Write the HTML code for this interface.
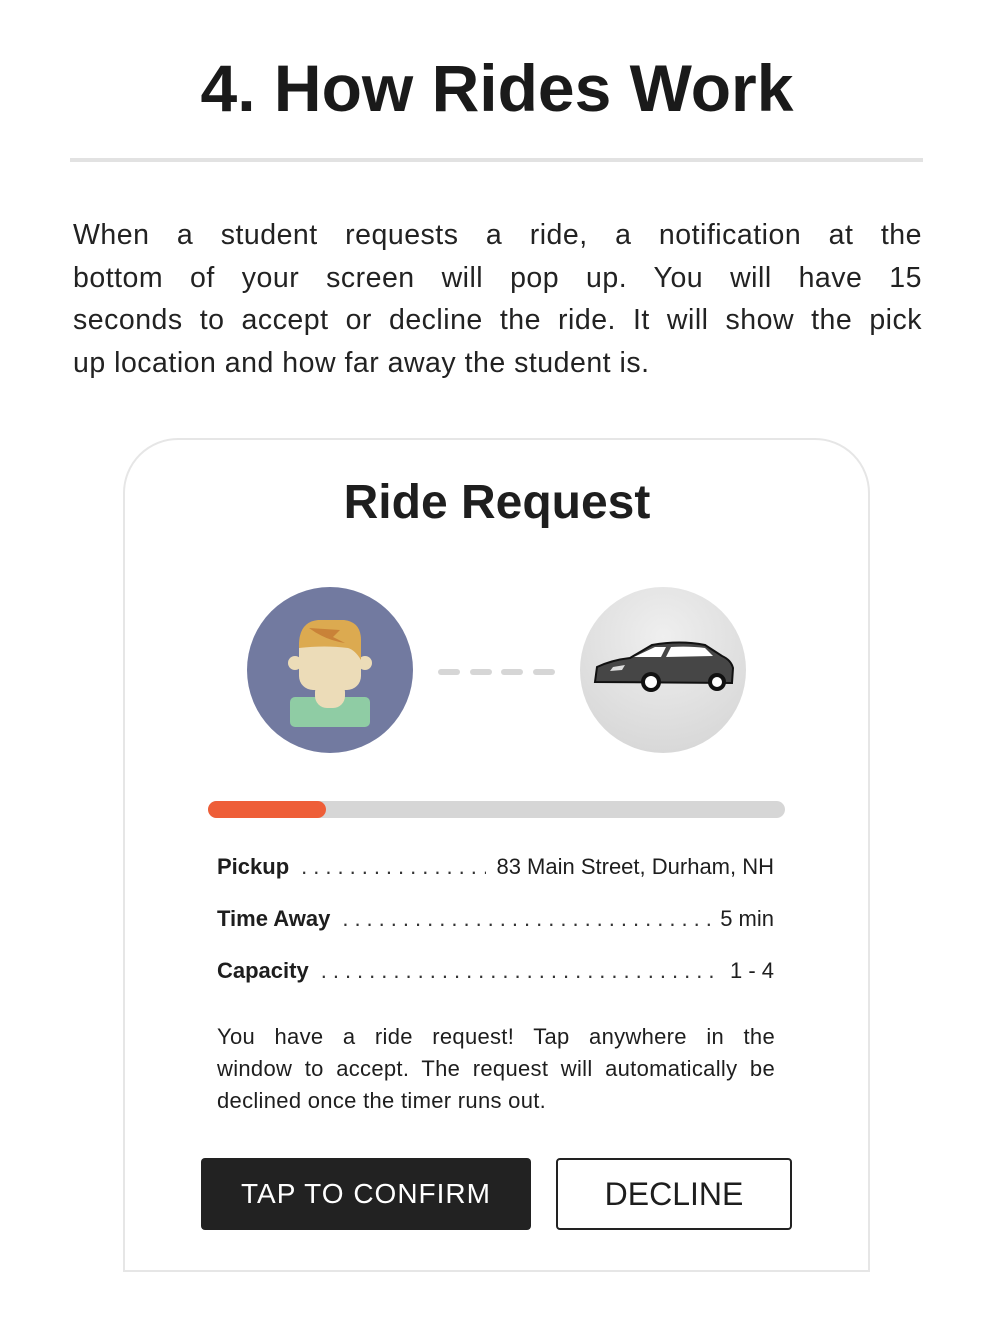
<!DOCTYPE html>
<html><head><meta charset="utf-8"><style>
*{margin:0;padding:0;box-sizing:border-box}
body{width:994px;height:1332px;background:#fff;position:relative;font-family:"Liberation Sans",sans-serif;color:#1e1e1e;overflow:hidden}
.a{position:absolute}
h1{position:absolute;left:0;width:994px;top:48px;text-align:center;font-size:66px;font-weight:bold;line-height:80px;color:#1a1a1a}
.rule{left:70px;top:158px;width:853px;height:4px;background:#e2e2e2}
.intro{left:73px;top:214px;width:849px;font-size:28.5px;line-height:42.5px;color:#222;letter-spacing:0.5px}
.j{text-align:justify;text-align-last:justify;white-space:nowrap}
.card{left:123px;top:438px;width:747px;height:834px;border:2px solid #e6e6e6;border-radius:55px 55px 0 0}
.rt{left:0;width:994px;top:473px;text-align:center;font-size:48px;font-weight:bold;line-height:60px}
.row{left:217px;width:557px;font-size:22px;line-height:28px;display:flex;white-space:nowrap}
.row b{margin-right:12px}
.row .d{flex:1;overflow:hidden;letter-spacing:6px;color:#333}
.row .v{margin-left:10px}
.p{left:217px;top:1021px;width:558px;font-size:22px;line-height:32px;letter-spacing:0.3px}
.b1{left:201px;top:1158px;width:330px;height:72px;background:#222;border-radius:4px;color:#fff;font-size:28px;text-align:center;line-height:72px;letter-spacing:1px}
.b2{left:556px;top:1158px;width:236px;height:72px;border:2px solid #222;border-radius:4px;font-size:32px;text-align:center;line-height:68px}
</style></head><body>
<h1>4. How Rides Work</h1>
<div class="a rule"></div>
<div class="a intro"><div class="j">When a student requests a ride, a notification at the</div><div class="j">bottom of your screen will pop up. You will have 15</div><div class="j">seconds to accept or decline the ride. It will show the pick</div><div>up location and how far away the student is.</div></div>
<div class="a card"></div>
<div class="a rt">Ride Request</div>
<svg class="a" style="left:0;top:0" width="994" height="840" viewBox="0 0 994 840">
<defs><radialGradient id="g" cx="0.5" cy="0.3" r="0.7"><stop offset="0" stop-color="#efefef"/><stop offset="1" stop-color="#d8d8d8"/></radialGradient></defs>
<circle cx="330" cy="670" r="83" fill="#727aa0"/>
<rect x="290" y="697" width="80" height="30" rx="5" fill="#8fcca4"/>
<rect x="315" y="680" width="30" height="28" rx="12" fill="#ecdcb8"/>
<circle cx="295" cy="663" r="7" fill="#ecdcb8"/>
<circle cx="365" cy="663" r="7" fill="#ecdcb8"/>
<rect x="299" y="632" width="62" height="58" rx="14" fill="#ecdcb8"/>
<path d="M299 648 Q298 622 318 620 L344 620 Q361 622 361 640 L361 660 Q355 650 348 648 Q325 645 299 648Z" fill="#dcaa50"/>
<path d="M309 628 L340 630 L333 637 L345 643 Q325 640 309 628Z" fill="#c98238"/>
<g fill="#d6d6d6"><rect x="438" y="669" width="22" height="6" rx="3"/><rect x="470" y="669" width="22" height="6" rx="3"/><rect x="501" y="669" width="22" height="6" rx="3"/><rect x="533" y="669" width="22" height="6" rx="3"/></g>
<circle cx="663" cy="670" r="83" fill="url(#g)"/>
<path d="M595 682 L597 667 Q612 660 630 658 L652 645 Q680 640 705 645 L722 656 Q731 660 733 668 L732 683 Z" fill="#464646" stroke="#111" stroke-width="2"/>
<path d="M634 657 L655 647 L666 647 L661 657Z M666 657 L671 647 Q690 646 705 648 L713 656Z" fill="#fff"/>
<path d="M613 667 L625 665 L622 670 L610 671Z" fill="#ddd"/>
<circle cx="651" cy="682" r="10" fill="#111"/><circle cx="651" cy="682" r="6" fill="#fff"/>
<circle cx="717" cy="682" r="9" fill="#111"/><circle cx="717" cy="682" r="5" fill="#fff"/>
<rect x="208" y="801" width="577" height="17" rx="8.5" fill="#d6d6d6"/>
<rect x="208" y="801" width="118" height="17" rx="8.5" fill="#ee5e38"/>
</svg>
<div class="a row" style="top:853px"><b>Pickup</b><span class="d">....................................</span><span class="v">83 Main Street, Durham, NH</span></div>
<div class="a row" style="top:905px"><b>Time Away</b><span class="d">.......................................................</span><span class="v">5 min</span></div>
<div class="a row" style="top:957px"><b>Capacity</b><span class="d">.......................................................</span><span class="v">1 - 4</span></div>
<div class="a p"><div class="j">You have a ride request! Tap anywhere in the</div><div class="j">window to accept. The request will automatically be</div><div>declined once the timer runs out.</div></div>
<div class="a b1">TAP TO CONFIRM</div>
<div class="a b2">DECLINE</div>
</body></html>
